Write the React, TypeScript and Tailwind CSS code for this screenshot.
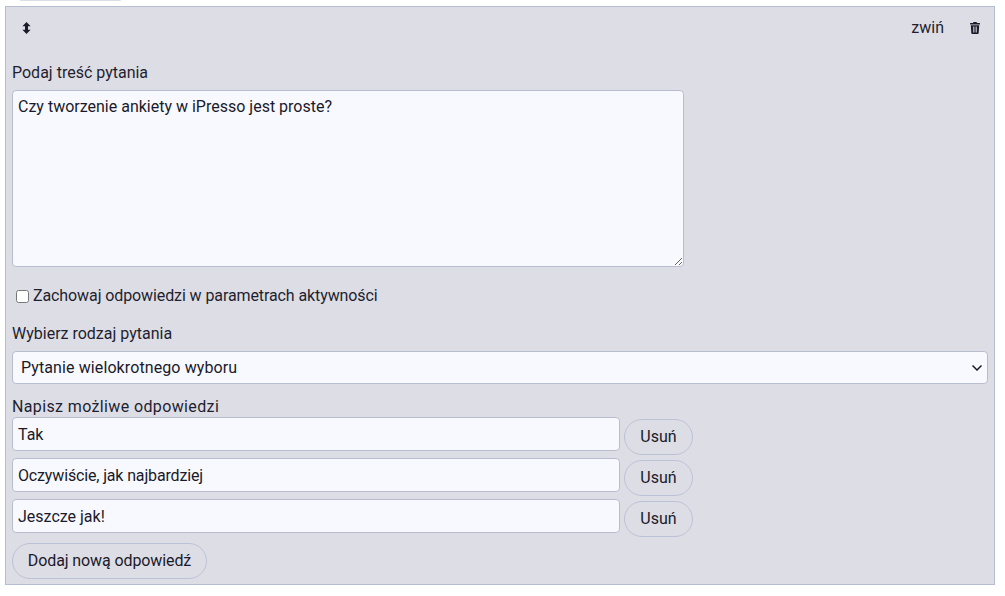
import React from "react";

function Answer({ value, tracking = "" }: { value: string; tracking?: string }) {
  return (
    <div className="flex items-start h-[41px]">
      <input readOnly value={value} className={`w-[608px] h-[34px] rounded-[4px] border border-[#b9bdd0] bg-[#f8f9ff] px-[5px] text-[16px] text-[#1a1a2a] outline-none ${tracking}`} />
      <button className="ml-[4px] mt-[2px] w-[69px] h-[36px] rounded-full border border-[#bcc2d5] text-[16px] text-[#1a1a2a]">Usuń</button>
    </div>
  );
}

export default function App() {
  return (
    <div className="w-[1005px] h-[596px] bg-white overflow-hidden px-[5px] font-['Roboto',sans-serif] text-[#1f1f2e]">
      <div className="ml-[15px] w-[101px] h-px rounded-b bg-[#dddde6]" />
      <div className="mt-[5px] w-[990px] h-[579px] border border-[#b4bdd2] bg-[#dddde6] px-[6px]">
        <div className="flex items-center h-[41px]">
          <svg width="9" height="12" viewBox="0 0 9 12" className="ml-[10px] fill-[#1a1a2a]">
            <path d="M4.5 0 L8.6 4.2 L6 4.2 L6 7.8 L8.6 7.8 L4.5 12 L.4 7.8 L3 7.8 L3 4.2 L.4 4.2 Z" />
          </svg>
          <span className="ml-auto text-[16px]">zwiń</span>
          <svg width="10" height="12" viewBox="0 0 10 12" className="ml-[26px] mr-[8px] fill-[#1a1a2a]">
            <path fillRule="evenodd" d="M3.5 0 H6.5 L7 1 H9.6 Q10 1 10 1.4 V2.4 H0 V1.4 Q0 1 .4 1 H3 Z M.8 3.2 H9.2 L8.7 11 Q8.6 12 7.7 12 H2.3 Q1.4 12 1.3 11 Z M3 4.6 V10.4 H3.7 V4.6 Z M4.65 4.6 V10.4 H5.35 V4.6 Z M6.3 4.6 V10.4 H7 V4.6 Z" />
          </svg>
        </div>
        <div className="h-[42px] pt-[14px] text-[16px] leading-[22px]">Podaj treść pytania</div>
        <textarea
          readOnly
          value="Czy tworzenie ankiety w iPresso jest proste?"
          className="block w-[672px] h-[177px] rounded-[4px] border border-[#b9bdd0] bg-[#f8f9ff] px-[5px] py-[4px] text-[16px] leading-[24px] text-[#1a1a2a] outline-none"
        />
        <div className="flex items-center h-[24px] mt-[17px] pl-[4px]">
          <input type="checkbox" className="w-[13px] h-[13px]" />
          <span className="ml-[4px] text-[16px] tracking-[-0.1px]">Zachowaj odpowiedzi w parametrach aktywności</span>
        </div>
        <div className="mt-[15px] h-[22px] text-[16px] leading-[22px]">Wybierz rodzaj pytania</div>
        <div className="mt-[6px] flex items-center w-[976px] h-[33px] rounded-[4px] border border-[#b9bdd0] bg-[#f8f9ff] pl-[8px] pr-[5px] text-[16px] text-[#1a1a2a]">
          <span className="tracking-[0.1px]">Pytanie wielokrotnego wyboru</span>
          <svg width="10" height="6" viewBox="0 0 10 6" className="ml-auto fill-none stroke-[#1a1a2a] stroke-[1.5]">
            <path d="M.5 .5 L5 5 L9.5 .5" />
          </svg>
        </div>
        <div className="mt-[12px] h-[21px] text-[16px] leading-[22px] tracking-[0.37px]">Napisz możliwe odpowiedzi</div>
        <Answer value="Tak" />
        <Answer value="Oczywiście, jak najbardziej" tracking="tracking-[-0.15px]" />
        <Answer value="Jeszcze jak!" />
        <button className="block mt-[3px] w-[195px] h-[36px] rounded-full border border-[#bcc2d5] text-[16px] text-[#1a1a2a] tracking-[-0.1px]">Dodaj nową odpowiedź</button>
      </div>
    </div>
  );
}
